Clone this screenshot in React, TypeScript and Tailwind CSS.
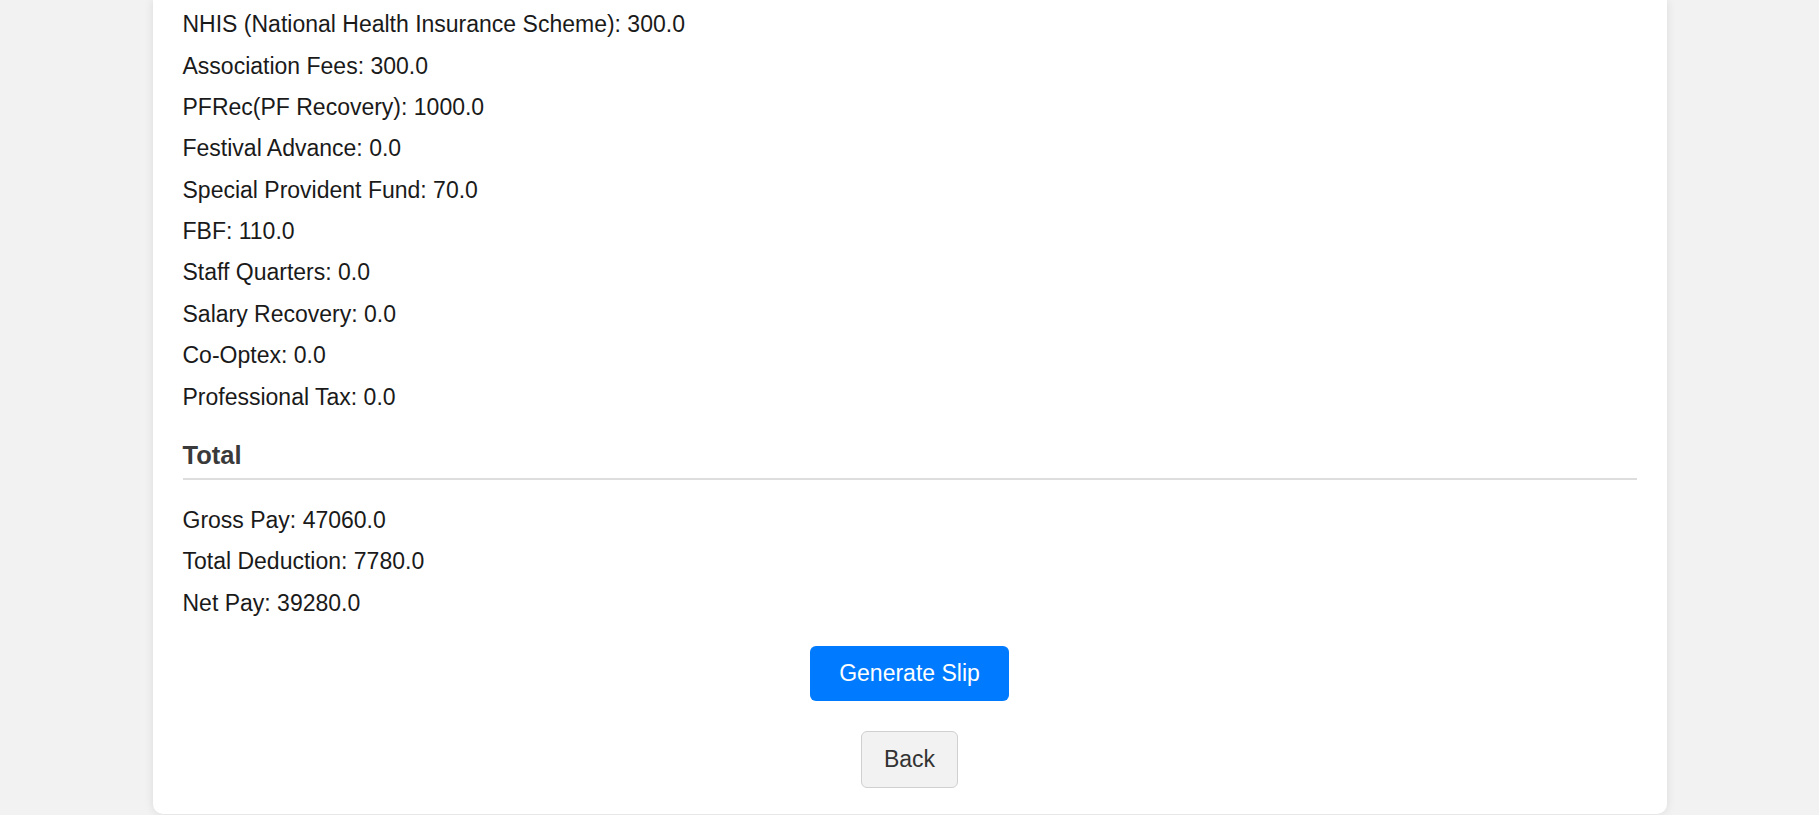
import React from "react";

const deductions = [
  "NHIS (National Health Insurance Scheme): 300.0",
  "Association Fees: 300.0",
  "PFRec(PF Recovery): 1000.0",
  "Festival Advance: 0.0",
  "Special Provident Fund: 70.0",
  "FBF: 110.0",
  "Staff Quarters: 0.0",
  "Salary Recovery: 0.0",
  "Co-Optex: 0.0",
  "Professional Tax: 0.0",
];

const totals = ["Gross Pay: 47060.0", "Total Deduction: 7780.0", "Net Pay: 39280.0"];

export default function App() {
  return (
    <div
      className="min-h-[815px] bg-[#f2f2f2] pb-[2px]"
      style={{ fontFamily: '"Liberation Sans", Arial, sans-serif' }}
    >
      <div className="mx-auto w-[1514px] rounded-b-[10px] bg-white px-[30px] pt-[3.7px] pb-[26px] shadow-[0_0_10px_rgba(0,0,0,0.1)]">
        <div className="flex flex-col">
          {deductions.map((d) => (
            <div key={d} className="flex h-[41.4px] items-center text-[23px] text-[#1a1a1a]">
              {d}
            </div>
          ))}
        </div>
        <div className="mt-[23px] border-b-2 border-[#dddddd] pb-[9px] text-[25.5px] font-bold leading-[28px] text-[#3a3a3a]">
          Total
        </div>
        <div className="mt-[20px] flex flex-col">
          {totals.map((d) => (
            <div key={d} className="flex h-[41.4px] items-center text-[23px] text-[#1a1a1a]">
              {d}
            </div>
          ))}
        </div>
        <div className="mt-[22px] flex flex-col items-center">
          <button className="h-[55px] rounded-[6px] bg-[#007bff] px-[29px] text-[23px] text-white">
            Generate Slip
          </button>
          <button className="mt-[30px] h-[57px] rounded-[6px] border border-[#d0d0d0] bg-[#f2f2f2] px-[22px] text-[23px] text-[#333]">
            Back
          </button>
        </div>
      </div>
    </div>
  );
}
